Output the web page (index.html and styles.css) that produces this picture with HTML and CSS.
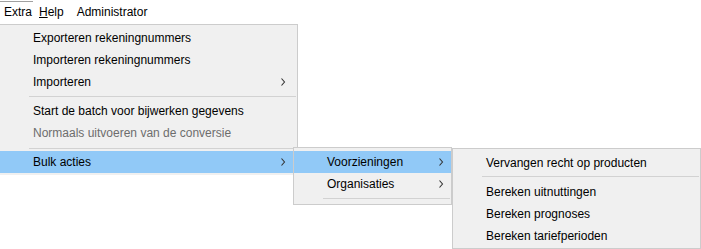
FILE: index.html
```html
<!DOCTYPE html>
<html>
<head>
<meta charset="utf-8">
<link rel="stylesheet" href="styles.css">
</head>
<body>
<div class="menubar">
  <span class="mb-item mb-open">Extra</span>
  <span class="mb-item mb-help"><u>H</u>elp</span>
  <span class="mb-item">Administrator</span>
</div>

<div class="menu menu-main">
  <div class="item">Exporteren rekeningnummers</div>
  <div class="item">Importeren rekeningnummers</div>
  <div class="item">Importeren<svg class="chev" width="5" height="8" viewBox="0 0 5 8"><polyline points="0.5,0.5 3.5,4 0.5,7.5" fill="none" stroke="#333" stroke-width="1.1"/></svg></div>
  <div class="sep sep-a"></div>
  <div class="item">Start de batch voor bijwerken gegevens</div>
  <div class="item disabled">Normaals uitvoeren van de conversie</div>
  <div class="sep sep-b"></div>
  <div class="item active">Bulk acties<svg class="chev" width="5" height="8" viewBox="0 0 5 8"><polyline points="0.5,0.5 3.5,4 0.5,7.5" fill="none" stroke="#333" stroke-width="1.1"/></svg></div>
</div>

<div class="menu menu-sub1">
  <div class="item active">Voorzieningen<svg class="chev" width="5" height="8" viewBox="0 0 5 8"><polyline points="0.5,0.5 3.5,4 0.5,7.5" fill="none" stroke="#333" stroke-width="1.1"/></svg></div>
  <div class="item">Organisaties<svg class="chev" width="5" height="8" viewBox="0 0 5 8"><polyline points="0.5,0.5 3.5,4 0.5,7.5" fill="none" stroke="#333" stroke-width="1.1"/></svg></div>
  <div class="sep sep-c"></div>
</div>

<div class="menu menu-sub2">
  <div class="item">Vervangen recht op producten</div>
  <div class="sep sep-d"></div>
  <div class="item">Bereken uitnuttingen</div>
  <div class="item">Bereken prognoses</div>
  <div class="item">Bereken tariefperioden</div>
</div>
</body>
</html>
```

FILE: styles.css
```css
html, body {
  margin: 0;
  padding: 0;
  background: #ffffff;
  width: 701px;
  height: 249px;
  overflow: hidden;
  font-family: "Liberation Sans", Arial, sans-serif;
  font-size: 12px;
  color: #000;
}

.menubar {
  display: flex;
  height: 24px;
  align-items: flex-start;
  padding-top: 1px;
  box-sizing: border-box;
}

.mb-item {
  display: block;
  height: 22px;
  line-height: 22px;
  padding: 0 4px;
  margin-right: 1px;
  box-sizing: border-box;
}

.mb-open {
  width: 33px;
  border-top: 1px solid #a0a0a0;
  line-height: 21px;
}

.mb-help {
  margin-left: 1px;
  margin-right: 5px;
}

.menu {
  position: absolute;
  background: #f0f0f0;
  border: 1px solid #cccccc;
  box-sizing: border-box;
}

.menu-main {
  left: -1px;
  top: 24px;
  width: 299px;
  height: 151px;
  padding-top: 2px;
  border-bottom: none;
}

.menu-sub1 {
  left: 293px;
  top: 147px;
  width: 159px;
  height: 58px;
  padding-top: 3px;
}

.menu-sub2 {
  left: 452px;
  top: 148px;
  width: 249px;
  height: 101px;
  padding-top: 3px;
}

.item {
  display: flex;
  align-items: center;
  height: 22px;
  padding-left: 33px;
  white-space: nowrap;
}

.item.disabled {
  color: #6d6d6d;
}

.item.active {
  background: #91c9f7;
}

.chev {
  margin-left: auto;
  display: block;
}

.menu-main .chev {
  margin-right: 11px;
}

.menu-sub1 .chev {
  margin-right: 7px;
}

.sep {
  height: 1px;
  background: #d2d2d2;
  margin-left: 29px;
  margin-right: 1px;
}

.sep-a {
  margin-top: 3px;
  margin-bottom: 3px;
}

.sep-b {
  margin-top: 4px;
  margin-bottom: 2px;
}

.sep-c {
  margin-top: 3px;
}

.sep-d {
  margin-top: 2px;
  margin-bottom: 4px;
}
```
